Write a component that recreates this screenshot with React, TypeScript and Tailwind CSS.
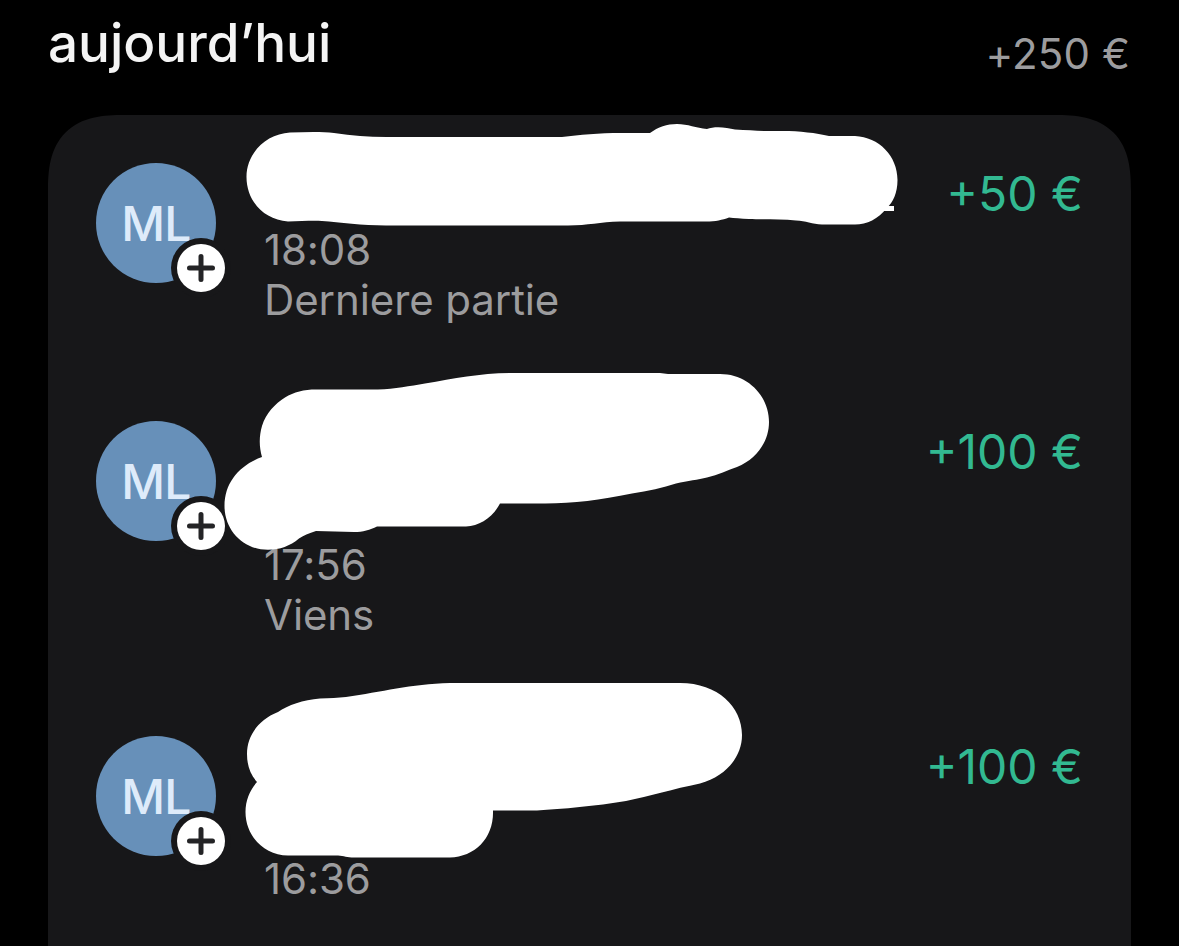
type Transaction = {
  time: string;
  note?: string;
  amount: string;
  height: string;
  titleHeight: string;
  maskBox: string;
  maskClass: string;
  maskPaths: string[];
};

const transactions: Transaction[] = [
  {
    time: "18:08",
    note: "Derniere partie",
    amount: "+50 €",
    height: "h-[258px]",
    titleHeight: "h-[62px]",
    maskBox: "240 120 670 110",
    maskClass: "left-[144px] top-[-43px] w-[670px] h-[110px]",
    maskPaths: [
      "M290 132.500 C306 132 322 131.500 334 133 C352 135.500 368 137 386 137 H562 C580 135 598 133 622 133 L650 133 C658 127 667 124 677 124 C688 124 696 128 707 129 C714 126 726 127 735 129.500 C747 130 756 131 766 131 H782 C800 131 816 133 829 136 H855 C879 137 897.500 156 897.500 180 C897.500 193 893 202 887 208 C878 219 867 224.500 855 224.500 H822 C812 224 806 221 796 220.500 C780 219 760 219.500 749 219 C741 218.500 734 218 729 217.500 C722 220 716 221.500 706 221.500 H620 C600 222 588 225.500 568 225.500 H386 C362 225.500 340 222.500 322 221 C310 220.500 300 221.500 288 221.500 C264 220 246.500 201 246.500 177 C246.500 153 266 134 290 132.500 Z",
      "M884 206 H894 V211 H880 Z",
    ],
  },
  {
    time: "17:56",
    note: "Viens",
    amount: "+100 €",
    height: "h-[315px]",
    titleHeight: "h-[119px]",
    maskBox: "220 365 560 190",
    maskClass: "left-[124px] top-[-56px] w-[560px] h-[190px]",
    maskPaths: [
      "M316 389.500 H378 C395 389 410 386 425 383.500 C455 378.500 480 373 512 373 H660 L668 374 H720 C748 374 769 396 769 422 C769 441 757 459 737 467 C728 470 718 475 707 477.500 C698 480 688 480.500 676 483.500 C663 488 648 491 632 493.500 C600 500 574 503.500 545 503.500 H500 C493 517 480 526 466 526.500 H377 C370 530 363 532 354 532 L316 531 C309 533 303 536 299 538.500 C290 546 280 549.800 268 549.800 C243 549.800 224.500 530 224.500 506 C224.500 482 240 465 262 457 C259 447 259 436 262 426 C266 413 275 404 285 397.500 C294 392 304 389.500 316 389.500 Z",
    ],
  },
  {
    time: "16:36",
    amount: "+100 €",
    height: "h-[300px]",
    titleHeight: "h-[118px]",
    maskBox: "240 675 510 190",
    maskClass: "left-[144px] top-[-61px] w-[510px] h-[190px]",
    maskPaths: [
      "M320 698.500 C330 698 338 698 346 697 C382 692 410 684 450 683 H680 C718 683 742 707 742 735 C742 756 727 776 700 783.500 C673 789 650 796 626 801 C596 806 562 809 537 810.500 H493 C494 838 475 857 450 857.500 H354 C347 857.500 344 856 338 855.500 H288 C264 855 245.500 836 245.500 812 C245.500 800 250 790 257 782 C250 774 247 765 247 754 C247 736 258 720 278 712 C288 705 303 700 320 698.500 Z",
    ],
  },
];

function Avatar() {
  return (
    <div className="relative flex size-[120px] shrink-0 items-center justify-center rounded-full bg-[#6790b9]">
      <span className="text-[48px] leading-[57px] font-medium tracking-[-0.8px] text-[#deebfa]">ML</span>
      <div className="absolute top-[75px] left-[75px] flex size-[60px] items-center justify-center rounded-full bg-[#171719]">
        <div className="flex size-12 items-center justify-center rounded-full bg-white">
          <svg className="size-7" viewBox="0 0 28 28" fill="none" stroke="#242426" strokeWidth="5" strokeLinecap="round">
            <path d="M14 2.500V25.500M2.500 14H25.500" />
          </svg>
        </div>
      </div>
    </div>
  );
}

function Row({ item }: { item: Transaction }) {
  return (
    <li className={`relative flex items-start ${item.height}`}>
      <Avatar />
      <div className="ml-12 flex-1 text-[42px] leading-[50px] tracking-[-0.1px] text-[#9c9c9e]">
        <div className={item.titleHeight} />
        <p>{item.time}</p>
        {item.note && <p>{item.note}</p>}
      </div>
      <p className="pt-[2px] text-[48px] leading-[57px] text-[#32b991]">{item.amount}</p>
      <svg className={`absolute ${item.maskClass}`} viewBox={item.maskBox} fill="#fff">
        {item.maskPaths.map((d) => (
          <path key={d} d={d} />
        ))}
      </svg>
    </li>
  );
}

export default function App() {
  return (
    <main className="flex h-[946px] w-[1179px] flex-col overflow-hidden bg-black px-12 font-['Inter',sans-serif]">
      <header className="flex h-[115px] shrink-0 items-start justify-between">
        <h1 className="pt-[12px] text-[53px] leading-[63px] font-medium text-[#f4f4f4]">aujourd’hui</h1>
        <p className="pt-[29px] pr-px text-[42px] leading-[50px] tracking-[0.1px] text-[#9c9c9e]">+250 €</p>
      </header>
      <ul className="w-[1083px] flex-1 rounded-t-[76px] bg-[#171719] px-12 pt-12 [corner-shape:superellipse(1.4)]">
        {transactions.map((item) => (
          <Row key={item.time} item={item} />
        ))}
      </ul>
    </main>
  );
}
